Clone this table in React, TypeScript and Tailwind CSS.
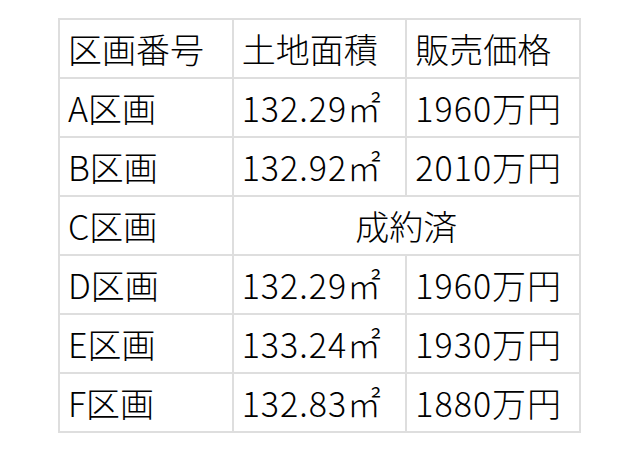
import React from "react";

const rows: [string, string, string][] = [
  ["A区画", "132.29㎡", "1960万円"],
  ["B区画", "132.92㎡", "2010万円"],
  ["C区画", "", ""],
  ["D区画", "132.29㎡", "1960万円"],
  ["E区画", "133.24㎡", "1930万円"],
  ["F区画", "132.83㎡", "1880万円"],
];

function Cell({
  children,
  center,
  wide,
}: {
  children: React.ReactNode;
  center?: boolean;
  wide?: boolean;
}) {
  return (
    <div
      className={
        "bg-white h-[57px] flex items-center px-[8px] whitespace-nowrap " +
        (center ? "justify-center col-span-2 " : "") +
        (wide ? "tracking-[1px]" : "")
      }
    >
      {children}
    </div>
  );
}

export default function App() {
  return (
    <div
      className="w-[640px] h-[452px] bg-white pt-[18px] pl-[58px] text-black"
      style={{ fontFamily: '"Noto Sans CJK JP", "Noto Sans", sans-serif' }}
    >
      <div className="w-[523px] grid grid-cols-3 gap-[2px] p-[2px] bg-[#dedede] text-[34px] leading-none font-light">
        <Cell>区画番号</Cell>
        <Cell>土地面積</Cell>
        <Cell>販売価格</Cell>
        {rows.map((r) =>
          r[0] === "C区画" ? (
            <React.Fragment key={r[0]}>
              <Cell>{r[0]}</Cell>
              <Cell center>成約済</Cell>
            </React.Fragment>
          ) : (
            <React.Fragment key={r[0]}>
              <Cell>{r[0]}</Cell>
              <Cell wide>{r[1]}</Cell>
              <Cell wide>{r[2]}</Cell>
            </React.Fragment>
          )
        )}
      </div>
    </div>
  );
}
